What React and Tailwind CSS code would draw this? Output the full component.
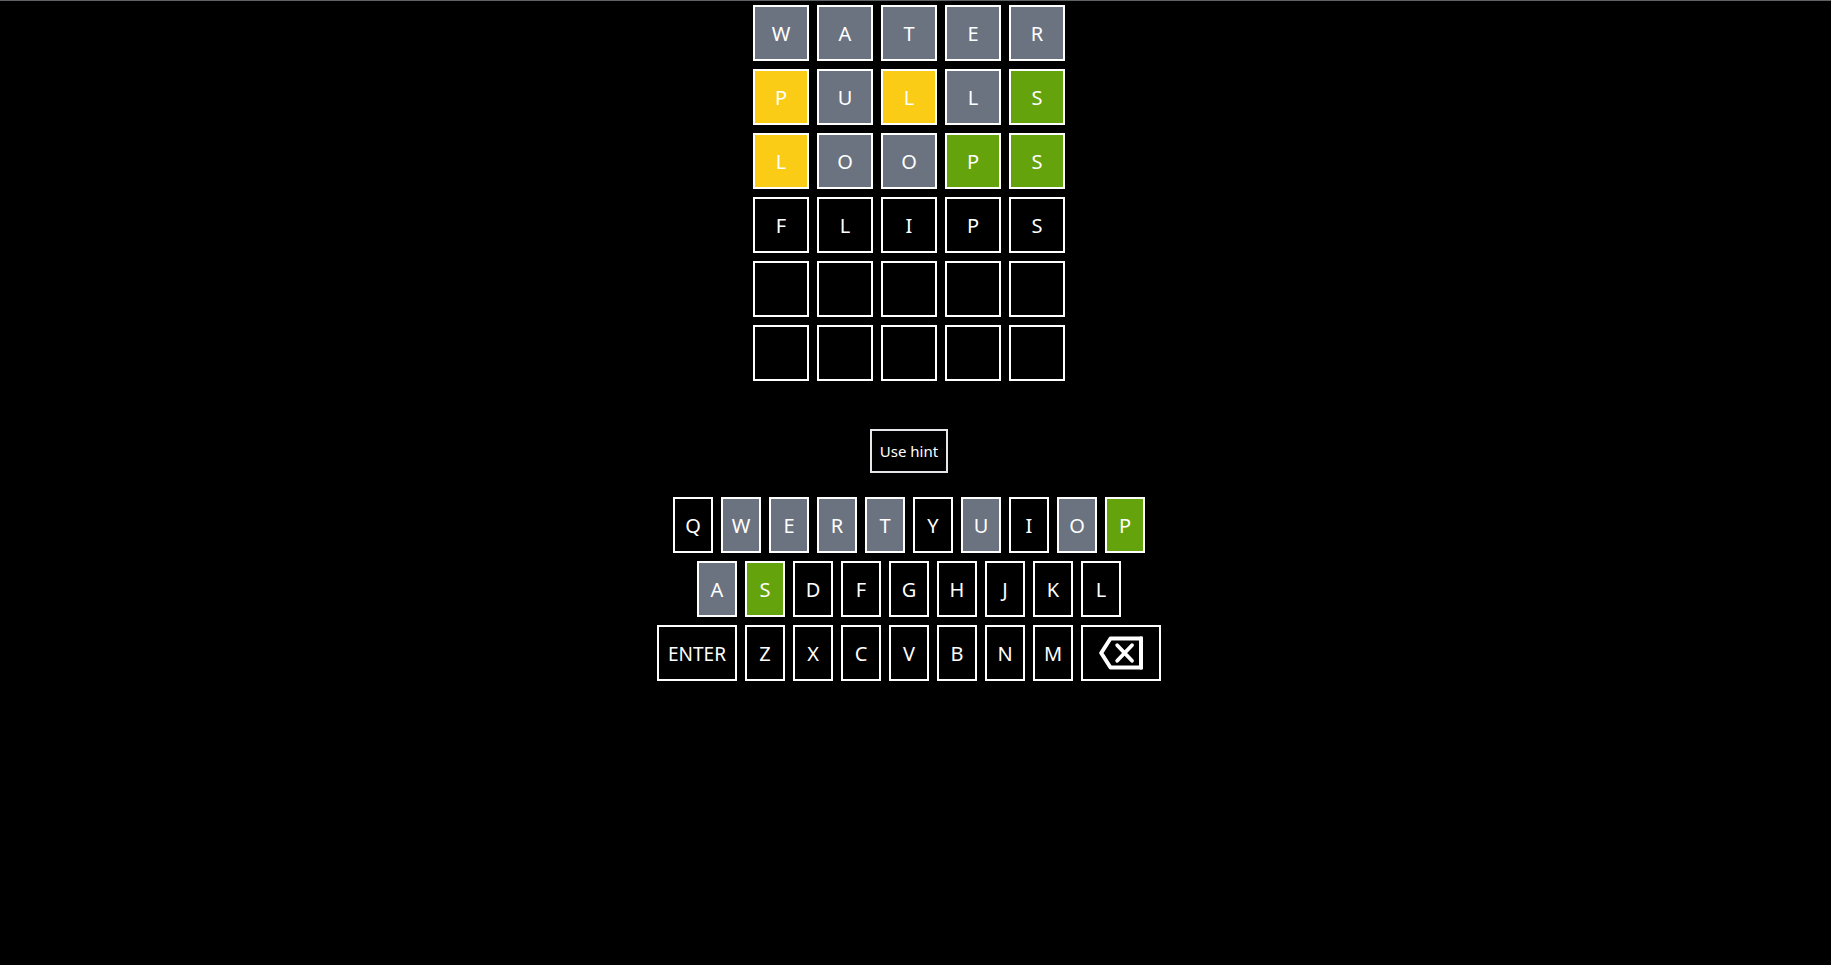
const TONES = {
  none: 'bg-black',
  absent: 'bg-[#6b7280]',
  present: 'bg-[#facc15]',
  correct: 'bg-[#65a30d]',
};

// One mark per letter: "-" absent, "?" present elsewhere, "+" correct, " " not judged yet.
const MARKS = { '-': 'absent', '?': 'present', '+': 'correct', ' ': 'none' };

const GUESSES = [
  ['WATER', '-----'],
  ['PULLS', '?-?-+'],
  ['LOOPS', '?--++'],
  ['FLIPS', '     '],
  ['     ', '     '],
  ['     ', '     '],
];

const KEY_ROWS = ['QWERTYUIOP', 'ASDFGHJKL', 'ZXCVBNM'];

const KEY_TONES = {
  W: 'absent',
  E: 'absent',
  R: 'absent',
  T: 'absent',
  U: 'absent',
  O: 'absent',
  A: 'absent',
  P: 'correct',
  S: 'correct',
};

function Tile({ letter, tone }) {
  return (
    <div className={`flex size-14 items-center justify-center border-2 border-white pt-0.5 text-xl ${TONES[tone]}`}>
      {letter.trim()}
    </div>
  );
}

function Key({ tone = 'none', size = 'w-10 pt-0.5 text-xl', label, children }) {
  return (
    <button
      type="button"
      aria-label={label}
      className={`flex h-14 items-center justify-center border-2 border-white ${size} ${TONES[tone]}`}
    >
      {children}
    </button>
  );
}

function BackspaceIcon() {
  return (
    <svg
      width="44"
      height="34"
      viewBox="0 0 44 34"
      fill="none"
      stroke="currentColor"
      aria-hidden="true"
    >
      <path d="M11.5 2.5H42V31.5H11.5L2.2 17Z" strokeWidth="4" strokeLinejoin="round" />
      <path d="M41 .9h2.6v2.6M41 33.1h2.6v-2.6" strokeWidth="0.9" />
      <path d="M18.2 9.2 33 24.8M33 9.2 18.2 24.8" strokeWidth="3.8" strokeLinecap="round" />
    </svg>
  );
}

export default function App() {
  return (
    <main className="flex min-h-screen flex-col items-center border-t border-[#5f6164] bg-black pt-1 pr-[13px] font-['Noto_Sans','Open_Sans',sans-serif] text-white">
      <section aria-label="Guesses" className="flex flex-col gap-2">
        {GUESSES.map(([word, marks], row) => (
          <div key={row} className="flex gap-2">
            {word.split('').map((letter, i) => (
              <Tile key={i} letter={letter} tone={MARKS[marks[i]]} />
            ))}
          </div>
        ))}
      </section>

      <button
        type="button"
        className="mt-12 border-2 border-gray-200 p-2 text-[15px] leading-6"
      >
        Use hint
      </button>

      <section aria-label="Keyboard" className="mt-6 flex flex-col gap-2">
        {KEY_ROWS.map((letters, row) => {
          const last = row === KEY_ROWS.length - 1;
          return (
            <div key={letters} className="flex justify-center gap-2">
              {last && <Key size="w-20 pt-0.5 text-[19px]">ENTER</Key>}
              {letters.split('').map((letter) => (
                <Key key={letter} tone={KEY_TONES[letter]}>
                  {letter}
                </Key>
              ))}
              {last && (
                <Key size="w-20" label="Backspace">
                  <BackspaceIcon />
                </Key>
              )}
            </div>
          );
        })}
      </section>
    </main>
  );
}
